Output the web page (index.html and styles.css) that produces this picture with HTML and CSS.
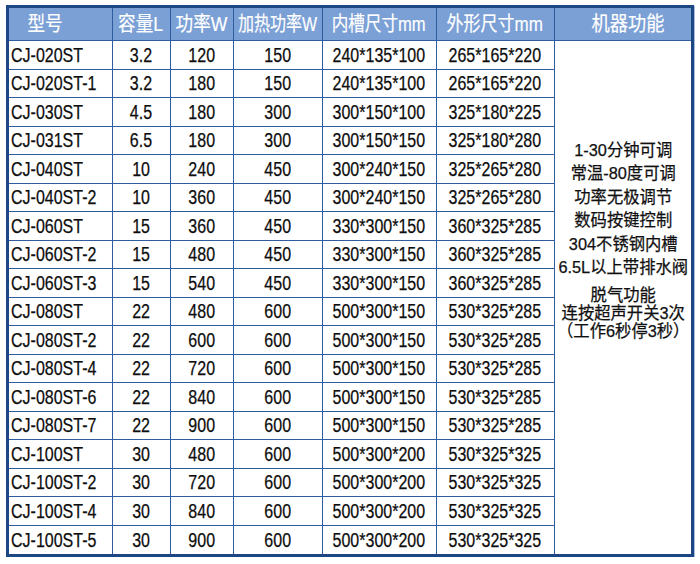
FILE: index.html
```html
<!DOCTYPE html>
<html lang="zh">
<head>
<meta charset="utf-8">
<link rel="stylesheet" href="styles.css">
</head>
<body>
<div class="frame">
<table class="spec">
<colgroup>
<col class="w1"><col class="w2"><col class="w3"><col class="w4"><col class="w5"><col class="w6"><col class="w7">
</colgroup>
<thead>
<tr>
<th class="h-model"><span>型号</span></th>
<th><span>容量L</span></th>
<th><span>功率W</span></th>
<th class="h-heat"><span>加热功率W</span></th>
<th class="h-in"><span>内槽尺寸mm</span></th>
<th class="h-out"><span>外形尺寸mm</span></th>
<th class="h-func"><span>机器功能</span></th>
</tr>
</thead>
<tbody>
<tr><td class="m"><span>CJ-020ST</span></td><td><span>3.2</span></td><td><span>120</span></td><td><span>150</span></td><td><span>240*135*100</span></td><td><span>265*165*220</span></td>
<td class="func" rowspan="18">
<div class="func-text">
<div class="g1">
<p>1-30分钟可调</p>
<p>常温-80度可调</p>
<p>功率无极调节</p>
<p>数码按键控制</p>
<p>304不锈钢内槽</p>
<p>6.5L以上带排水阀</p>
</div>
<div class="g2">
<p>脱气功能</p>
<p>连按超声开关3次</p>
<p>（工作6秒停3秒）</p>
</div>
</div>
</td></tr>
<tr><td class="m"><span>CJ-020ST-1</span></td><td><span>3.2</span></td><td><span>180</span></td><td><span>150</span></td><td><span>240*135*100</span></td><td><span>265*165*220</span></td></tr>
<tr><td class="m"><span>CJ-030ST</span></td><td><span>4.5</span></td><td><span>180</span></td><td><span>300</span></td><td><span>300*150*100</span></td><td><span>325*180*225</span></td></tr>
<tr><td class="m"><span>CJ-031ST</span></td><td><span>6.5</span></td><td><span>180</span></td><td><span>300</span></td><td><span>300*150*150</span></td><td><span>325*180*280</span></td></tr>
<tr><td class="m"><span>CJ-040ST</span></td><td><span>10</span></td><td><span>240</span></td><td><span>450</span></td><td><span>300*240*150</span></td><td><span>325*265*280</span></td></tr>
<tr><td class="m"><span>CJ-040ST-2</span></td><td><span>10</span></td><td><span>360</span></td><td><span>450</span></td><td><span>300*240*150</span></td><td><span>325*265*280</span></td></tr>
<tr><td class="m"><span>CJ-060ST</span></td><td><span>15</span></td><td><span>360</span></td><td><span>450</span></td><td><span>330*300*150</span></td><td><span>360*325*285</span></td></tr>
<tr><td class="m"><span>CJ-060ST-2</span></td><td><span>15</span></td><td><span>480</span></td><td><span>450</span></td><td><span>330*300*150</span></td><td><span>360*325*285</span></td></tr>
<tr><td class="m"><span>CJ-060ST-3</span></td><td><span>15</span></td><td><span>540</span></td><td><span>450</span></td><td><span>330*300*150</span></td><td><span>360*325*285</span></td></tr>
<tr><td class="m"><span>CJ-080ST</span></td><td><span>22</span></td><td><span>480</span></td><td><span>600</span></td><td><span>500*300*150</span></td><td><span>530*325*285</span></td></tr>
<tr><td class="m"><span>CJ-080ST-2</span></td><td><span>22</span></td><td><span>600</span></td><td><span>600</span></td><td><span>500*300*150</span></td><td><span>530*325*285</span></td></tr>
<tr><td class="m"><span>CJ-080ST-4</span></td><td><span>22</span></td><td><span>720</span></td><td><span>600</span></td><td><span>500*300*150</span></td><td><span>530*325*285</span></td></tr>
<tr><td class="m"><span>CJ-080ST-6</span></td><td><span>22</span></td><td><span>840</span></td><td><span>600</span></td><td><span>500*300*150</span></td><td><span>530*325*285</span></td></tr>
<tr><td class="m"><span>CJ-080ST-7</span></td><td><span>22</span></td><td><span>900</span></td><td><span>600</span></td><td><span>500*300*150</span></td><td><span>530*325*285</span></td></tr>
<tr><td class="m"><span>CJ-100ST</span></td><td><span>30</span></td><td><span>480</span></td><td><span>600</span></td><td><span>500*300*200</span></td><td><span>530*325*325</span></td></tr>
<tr><td class="m"><span>CJ-100ST-2</span></td><td><span>30</span></td><td><span>720</span></td><td><span>600</span></td><td><span>500*300*200</span></td><td><span>530*325*325</span></td></tr>
<tr><td class="m"><span>CJ-100ST-4</span></td><td><span>30</span></td><td><span>840</span></td><td><span>600</span></td><td><span>500*300*200</span></td><td><span>530*325*325</span></td></tr>
<tr><td class="m"><span>CJ-100ST-5</span></td><td><span>30</span></td><td><span>900</span></td><td><span>600</span></td><td><span>500*300*200</span></td><td><span>530*325*325</span></td></tr>
</tbody>
</table>
</div>
</body>
</html>
```

FILE: styles.css
```css
html, body {
  margin: 0;
  padding: 0;
  background: #ffffff;
}

body {
  font-family: "Liberation Sans", "Noto Sans CJK SC", sans-serif;
  color: #111111;
}

.frame {
  width: fit-content;
  margin: 5px 0 0 6px;
  border: 3px solid #1d4685;
  box-shadow: 1px 1px 0 #a9bcdf;
}

.spec {
  border-collapse: collapse;
  border-style: hidden;
  table-layout: fixed;
  width: 682px;
}

.w1 { width: 103px; }
.w2 { width: 58px; }
.w3 { width: 63px; }
.w4 { width: 89px; }
.w5 { width: 114px; }
.w6 { width: 118px; }
.w7 { width: 137px; }

.spec th,
.spec td {
  border: 1px solid #2f5c9f;
  padding: 0;
  text-align: center;
  vertical-align: middle;
  white-space: nowrap;
  overflow: visible;
}

.spec thead tr {
  height: 32.5px;
}

.spec tbody tr {
  height: 28.5px;
}

.spec th {
  background: #7ba0d5;
  color: #ffffff;
  font-weight: normal;
  font-size: 20px;
  line-height: 24px;
  font-family: "Liberation Sans", "Noto Sans CJK SC", sans-serif;
  -webkit-text-stroke: 0.2px #ffffff;
}

.spec th span,
.spec td span {
  display: inline-block;
  margin: 0 -20px;
}

.spec th span {
  transform: scaleX(0.88);
}

.spec td span {
  transform: scaleX(0.8);
}

.spec th.h-model {
  padding-right: 30px;
}

.spec th.h-heat span {
  transform: scaleX(0.8);
}

.spec th.h-in span {
  transform: scaleX(0.83);
}

.spec th.h-out span {
  transform: scaleX(0.85);
}

.spec th.h-func {
  padding-left: 10px;
}

.spec th.h-func span {
  transform: scaleX(0.91);
}

.spec td {
  font-size: 20px;
  line-height: 22px;
  color: #0d0d0d;
  -webkit-text-stroke: 0.25px #0d0d0d;
}

.spec td.m {
  text-align: left;
  padding-left: 2px;
}

.spec td.m span {
  transform-origin: left center;
  margin: 0 -20px 0 0;
}

.spec td.func {
  vertical-align: top;
  padding-top: 98px;
}

.func-text {
  margin: 0 -10px;
  transform: scaleX(0.96);
  font-family: "Liberation Sans", "Noto Sans CJK SC", sans-serif;
  font-size: 17px;
  color: #111111;
}

.func-text p {
  margin: 0;
}

.g1 p {
  line-height: 23.4px;
}

.g2 {
  margin-top: 8px;
}

.g2 p {
  line-height: 18px;
}
```
